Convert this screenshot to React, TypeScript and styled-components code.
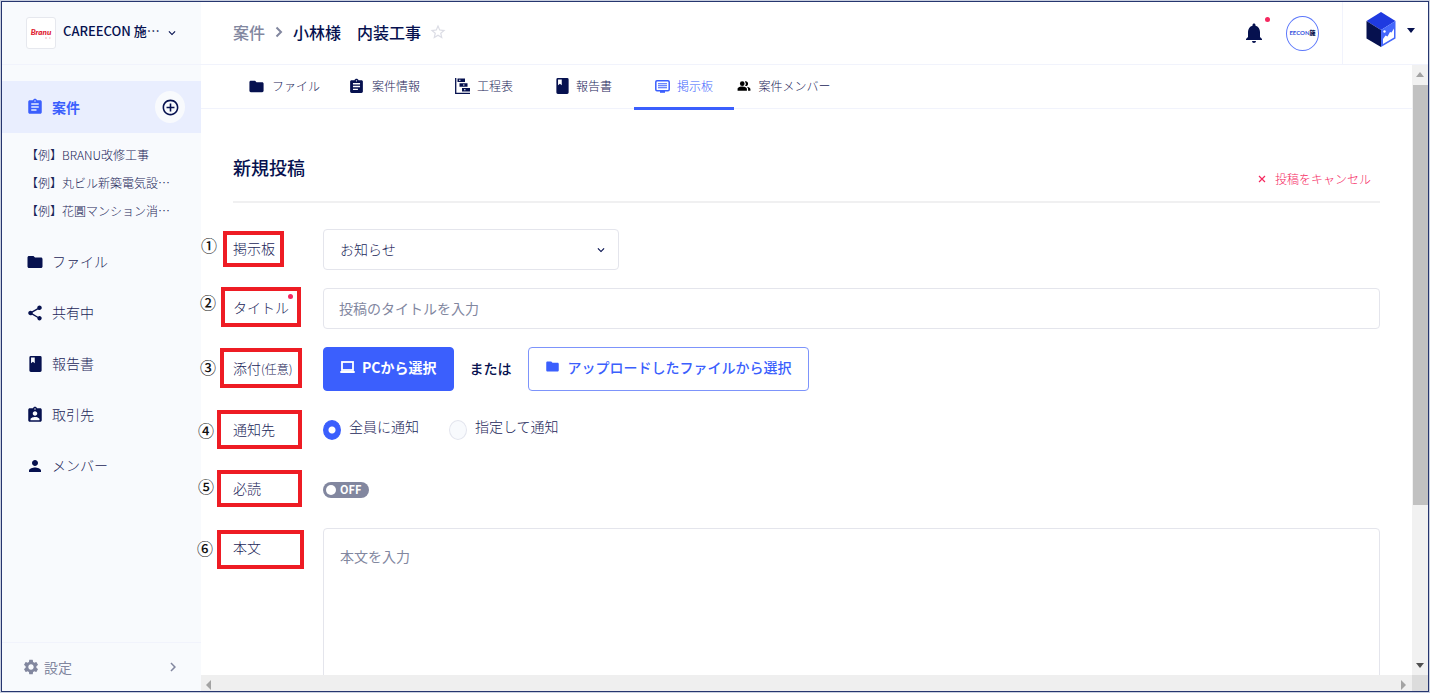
import React from 'react';
import styled, { createGlobalStyle, css } from 'styled-components';
import {
  MdAssignment,
  MdAssignmentInd,
  MdFolder,
  MdNotifications,
  MdPeopleAlt,
  MdPerson,
  MdSettings,
  MdShare,
  MdStarBorder,
  MdAddCircleOutline,
  MdKeyboardArrowDown,
  MdKeyboardArrowRight,
} from 'react-icons/md';

const color = {
  navy: '#06114f',
  text: '#1b2659',
  muted: '#82879f',
  blue: '#3b5ffd',
  pink: '#f5285f',
  line: '#f1f3fc',
  field: '#e4e5ec',
  side: '#f8fafd',
  mark: '#ee1c24',
};

const GlobalStyle = createGlobalStyle`
  *, *::before, *::after { box-sizing: border-box; }
  body {
    margin: 0;
    background: #fff;
    color: ${color.text};
    font-family: "Noto Sans CJK JP", "Noto Sans", sans-serif;
    font-size: 14px;
    font-weight: 300;
    line-height: 20px;
  }
  button, input, select, textarea { font: inherit; color: inherit; margin: 0; }
  button { border: 0; padding: 0; background: none; cursor: pointer; }
  a { color: inherit; text-decoration: none; }
  svg { display: block; flex: none; }
  ul { list-style: none; margin: 0; padding: 0; }
`;

const Frame = styled.div`
  height: 100vh;
  padding: 1px;
  background: #c9cfdf;
`;

const Shell = styled.div`
  display: flex;
  height: 100%;
  border: 1px solid #26366f;
  background: #fff;
  overflow: hidden;
`;

/* ---------- sidebar ---------- */

const Sidebar = styled.aside`
  display: flex;
  flex-direction: column;
  flex: 0 0 199px;
  background: ${color.side};
`;

const Workspace = styled.button`
  display: flex;
  align-items: center;
  height: 63px;
  padding: 0 22px 0 24px;
  border-bottom: 1px solid ${color.line};
  color: ${color.navy};
  font-size: 13px;
  font-weight: 500;
  text-align: left;
`;

const WorkspaceLogo = styled.span`
  display: grid;
  place-items: center;
  width: 30px;
  height: 32px;
  margin-right: 7px;
  border: 1px solid #e6e8ee;
  border-radius: 3px;
  background: #fff;
`;

const WorkspaceName = styled.span`
  flex: 1;
  padding-bottom: 5px;
  white-space: nowrap;
`;

const Nav = styled.nav`
  flex: 1;
  padding-top: 16px;
`;

const navRow = css`
  display: flex;
  align-items: center;
  gap: 8px;
  padding: 0 16px 0 25px;
`;

const ActiveRow = styled.div`
  ${navRow}
  height: 52px;
  background: #e9eefe;
  color: ${color.blue};
  font-weight: 700;
`;

const ActiveLink = styled.a`
  display: flex;
  flex: 1;
  align-items: center;
  gap: 8px;
`;

const AddButton = styled.button`
  display: grid;
  place-items: center;
  width: 30px;
  height: 32px;
  border-radius: 50%;
  background: ${color.side};
  color: ${color.navy};
`;

const ProjectList = styled.ul`
  padding: 8px 0 11px 24px;
  font-size: 12px;
  line-height: 28px;
`;

const NavLink = styled.a`
  ${navRow}
  height: 51px;

  svg { color: ${color.navy}; }
`;

const NavText = styled.span`
  padding-bottom: 2px;
`;

const NavIcon = styled.span`
  display: flex;
  justify-content: center;
  width: 18px;
  margin-left: -1px;
`;

const Settings = styled.a`
  display: flex;
  align-items: center;
  gap: 4px;
  height: 49px;
  padding: 0 19px 0 20px;
  border-top: 1px solid ${color.line};
  color: ${color.muted};

  span { flex: 1; font-weight: 400; }
`;

/* ---------- header ---------- */

const Main = styled.main`
  display: flex;
  flex: 1;
  flex-direction: column;
  min-width: 0;
`;

const Header = styled.header`
  display: flex;
  align-items: stretch;
  flex: 0 0 63px;
  padding-left: 32px;
  border-bottom: 1px solid ${color.line};
`;

const Breadcrumb = styled.div`
  display: flex;
  flex: 1;
  align-items: center;
  padding-bottom: 2px;
  color: ${color.navy};
  font-size: 16px;
  font-weight: 500;
  line-height: 24px;
  white-space: nowrap;

  a { color: ${color.muted}; }
  button { margin-left: 8px; color: #dcdde5; }
`;

const Crumb = styled.svg`
  margin: 0 10px;
`;

const HeaderTools = styled.div`
  display: flex;
  align-items: center;
  gap: 20px;
  padding-right: 23px;
`;

const BellButton = styled.button`
  position: relative;
  color: ${color.navy};
`;

const Dot = styled.span<{ $top: number; $right: number }>`
  position: absolute;
  top: ${(p) => p.$top}px;
  right: ${(p) => p.$right}px;
  width: 5px;
  height: 5px;
  border-radius: 50%;
  background: ${color.pink};
`;

const Avatar = styled.button`
  display: flex;
  align-items: center;
  justify-content: center;
  width: 33px;
  height: 35px;
  border: 1px solid #5d78fb;
  border-radius: 50%;
  color: #3552dd;
  font-family: Lato, "Noto Sans CJK JP", sans-serif;
  font-size: 6px;
  font-weight: 700;
  white-space: nowrap;

  b { color: ${color.navy}; }
`;

const AppSwitcher = styled.button`
  display: flex;
  align-items: center;
  gap: 10px;
  padding: 0 12px 6px 23px;
  border-left: 1px solid ${color.line};
`;

/* ---------- scrolling pane ---------- */

const Pane = styled.div`
  display: grid;
  flex: 1;
  grid-template-columns: minmax(0, 1fr) 16px;
  grid-template-rows: minmax(0, 1fr) 16px;
  min-height: 0;
`;

/* Callout numbers reach over the sidebar edge, so only the vertical axis is clipped. */
const Content = styled.div`
  min-height: 0;
  overflow-x: visible;
  overflow-y: clip;
`;

const VerticalBar = styled.div`
  display: flex;
  flex-direction: column;
  align-items: center;
  padding: 5px 0;
  background: #f1f1f1;
`;

const Thumb = styled.div`
  flex: 0 0 70%;
  align-self: stretch;
  margin: 5px 0 auto 1px;
  background: #c1c1c1;
`;

const HorizontalBar = styled.div`
  display: flex;
  align-items: center;
  justify-content: space-between;
  padding: 4px 4px 0 3px;
  background: #efefef;
`;

const Corner = styled.div`
  background: #dcdcdc;
`;

/* ---------- tabs ---------- */

const Tabs = styled.nav`
  display: flex;
  height: 44px;
  padding-left: 33px;
  border-bottom: 1px solid ${color.line};
`;

const Tab = styled.a<{ $active?: boolean }>`
  display: flex;
  align-items: center;
  justify-content: center;
  gap: 7px;
  flex: 0 0 100px;
  height: 45px;
  border-bottom: 3px solid ${(p) => (p.$active ? color.blue : 'transparent')};
  color: ${(p) => (p.$active ? color.blue : color.text)};
  font-size: 12px;
  white-space: nowrap;

  svg { color: ${(p) => (p.$active ? color.blue : color.navy)}; }
`;

/* ---------- form ---------- */

const Form = styled.form`
  padding: 42px 32px 0;
`;

const FormHead = styled.div`
  display: flex;
  align-items: flex-start;
  justify-content: space-between;
  height: 52px;
  margin-bottom: 26px;
  border-bottom: 2px solid #f0f0f1;
`;

const Title = styled.h1`
  margin: 0;
  color: ${color.navy};
  font-size: 18px;
  font-weight: 500;
  line-height: 32px;
`;

const Cancel = styled.button`
  display: flex;
  align-items: center;
  gap: 9px;
  margin: 18px 9px 0 0;
  color: ${color.pink};
  font-size: 12px;
`;

const Row = styled.div<{ $height: number }>`
  display: flex;
  align-items: center;
  min-height: ${(p) => p.$height}px;
  margin-bottom: 18px;
`;

const LabelCell = styled.div<{ $top?: boolean }>`
  position: relative;
  flex: 0 0 90px;
  align-self: ${(p) => (p.$top ? 'flex-start' : 'center')};
  padding-bottom: 2px;
  line-height: 39px;
  white-space: nowrap;

  small { font-size: 12px; }
`;

const Callout = styled.span<{ $left: number; $top: number; $width: number; $height: number }>`
  position: absolute;
  left: ${(p) => p.$left}px;
  top: ${(p) => p.$top}px;
  width: ${(p) => p.$width}px;
  height: ${(p) => p.$height}px;
  border: 4px solid ${color.mark};
  pointer-events: none;
`;

const CalloutNumber = styled.span<{ $left: number; $top: number }>`
  position: absolute;
  left: ${(p) => p.$left}px;
  top: ${(p) => p.$top}px;
  color: #111;
  font-size: 16px;
  font-weight: 500;
  line-height: 20px;
`;

const SelectWrap = styled.div`
  display: flex;
  align-items: center;
  flex: 0 1 296px;

  svg { margin-left: -25px; pointer-events: none; color: ${color.navy}; }
`;

const field = css`
  width: 100%;
  border: 1px solid ${color.field};
  border-radius: 4px;
  background: #fff;
  outline: 0;
`;

const Select = styled.select`
  ${field}
  height: 41px;
  padding: 0 16px 2px;
  appearance: none;
`;

const Input = styled.input`
  ${field}
  height: 41px;
  padding: 0 15px 2px;
  &::placeholder { color: ${color.muted}; font-weight: 400; }
`;

const TextArea = styled.textarea`
  ${field}
  display: block;
  height: 260px;
  padding: 17px 16px;
  resize: none;
  &::placeholder { color: ${color.muted}; font-weight: 400; }
`;

const UploadButton = styled.button<{ $primary?: boolean }>`
  display: flex;
  align-items: center;
  gap: ${(p) => (p.$primary ? 7 : 8)}px;
  height: 44px;
  padding: 0 16px 5px;
  border: 1px solid ${(p) => (p.$primary ? color.blue : '#7d94fb')};
  border-radius: 4px;
  background: ${(p) => (p.$primary ? color.blue : '#fff')};
  color: ${(p) => (p.$primary ? '#fff' : color.blue)};
  font-weight: ${(p) => (p.$primary ? 700 : 500)};
  white-space: nowrap;
`;

const Or = styled.span`
  margin: 0 16px;
  padding-bottom: 2px;
  color: ${color.navy};
  font-weight: 500;
`;

const RadioLabel = styled.label`
  display: flex;
  align-items: flex-start;
  gap: 8px;
  margin-right: 30px;
  padding-bottom: 4px;
`;

const Radio = styled.input`
  appearance: none;
  width: 18px;
  height: 20px;
  margin-top: 4px;
  border: 1px solid #e3e5ee;
  border-radius: 50%;
  background: ${color.side};

  &:checked {
    border-color: ${color.blue};
    background: radial-gradient(circle, #fff 3px, ${color.blue} 4px);
  }
`;

const Switch = styled.label`
  display: flex;
  align-items: center;
  gap: 4px;
  width: 46px;
  height: 16px;
  padding-left: 3px;
  border-radius: 8px;
  background: ${color.muted};
  color: #fff;
  font-size: 11px;
  font-weight: 700;
  line-height: 14px;

  span { padding-bottom: 2px; }
`;

const SwitchInput = styled.input`
  appearance: none;
  width: 10px;
  height: 10px;
  border-radius: 50%;
  background: #fff;
`;

/* ---------- drawings ---------- */

const ReportIcon = () => (
  <svg width="13" height="16" viewBox="0 0 14 17">
    <path fill="currentColor" fillRule="evenodd" d="M2 0h10a1.600 1.600 0 0 1 1.600 1.600v13.800A1.600 1.600 0 0 1 12 17H2A1.600 1.600 0 0 1 .4 15.400V1.600A1.600 1.600 0 0 1 2 0zM2.200 1.500v6.200l2-1.500 2 1.500V1.500z" />
  </svg>
);

const ScheduleIcon = () => (
  <svg width="15" height="16" viewBox="0 0 15 16">
    <path d="M.7 0v15.300H15" fill="none" stroke="currentColor" strokeWidth="1.300" />
    <path fill="currentColor" fillRule="evenodd" d="M2.500.5h7.500v3.500H2.500zM4 1.700v1.100h1.500V1.700zM4.500 5.300h8v3.500h-8zM8 6.500v1.100h1.500V6.500zM7 10h8v3.500H7zM9 11.200v1.100h1.500v-1.100z" />
  </svg>
);

const BoardIcon = () => (
  <svg width="15" height="15" viewBox="0 0 15 15">
    <rect x=".8" y="1.800" width="13.400" height="10" rx="1.200" fill="none" stroke="currentColor" strokeWidth="1.500" />
    <path d="M3 4.800h9M3 6.800h9M3 8.800h9" stroke="currentColor" strokeWidth="1.100" />
    <path d="M5 12h5v1.800H5z" fill="currentColor" />
  </svg>
);

const LaptopIcon = () => (
  <svg width="15" height="14" viewBox="0 0 15 14">
    <rect x="2" y="2" width="11" height="8" fill="none" stroke="currentColor" strokeWidth="1.800" />
    <path d="M.3 12h14.400" stroke="currentColor" strokeWidth="2" />
  </svg>
);

const BranuLogo = () => (
  <svg width="24" height="16" viewBox="0 0 24 16" aria-label="Branu">
    <text x="12" y="10" textAnchor="middle" fontFamily="Lato, sans-serif" fontSize="8" fontStyle="italic" fontWeight="900" fill="#e0202f">Branu</text>
    <path d="M16 13h2M20 13h1.500" stroke="#efb4b8" strokeWidth="1" />
  </svg>
);

const CubeLogo = () => (
  <svg width="30" height="36" viewBox="0 0 30 36">
    <path d="M15 0 29.500 9 15 18 .5 9z" fill="#1f3ae0" />
    <path d="M.5 9 15 18v17L.5 26.500z" fill="#06114f" />
    <path d="M29.500 9 15 18v17l14.500-8.500z" fill="#4467fb" />
    <path d="M17 32v-5l2.500-3.500 2 1 2.500-4.500 1.500.5 2.500-4v9z" fill="#fff" />
    <circle cx="18.500" cy="19.500" r="1.200" fill="#fff" />
  </svg>
);

const Arrow = ({ dir, fill }: { dir: 'up' | 'down' | 'left' | 'right'; fill: string }) => {
  const shapes = {
    up: 'M1 7 5 2l4 5z',
    down: 'M1 3l4 5 4-5z',
    left: 'M7 0 2 5l5 5z',
    right: 'M3 0l5 5-5 5z',
  };
  return (
    <svg width="10" height="10" viewBox="0 0 10 10">
      <path d={shapes[dir]} fill={fill} />
    </svg>
  );
};

/* ---------- page ---------- */

type Mark = { n: string; left: number; top: number; width: number; height: number; numberLeft: number; numberTop: number };

const Marker = ({ mark }: { mark: Mark }) => (
  <>
    <CalloutNumber $left={mark.numberLeft} $top={mark.numberTop}>{mark.n}</CalloutNumber>
    <Callout $left={mark.left} $top={mark.top} $width={mark.width} $height={mark.height} />
  </>
);

const marks: Record<string, Mark> = {
  board: { n: '①', left: -10, top: 2, width: 61, height: 36, numberLeft: -32, numberTop: 6 },
  title: { n: '②', left: -12, top: -1, width: 80, height: 40, numberLeft: -33, numberTop: 4 },
  attach: { n: '③', left: -13, top: -1, width: 82, height: 40, numberLeft: -33, numberTop: 8 },
  notify: { n: '④', left: -16, top: 0, width: 85, height: 39, numberLeft: -35, numberTop: 10 },
  must: { n: '⑤', left: -16, top: 1, width: 85, height: 37, numberLeft: -35, numberTop: 7 },
  body: { n: '⑥', left: -16, top: 2, width: 87, height: 39, numberLeft: -36, numberTop: 10 },
};

const projects = ['【例】BRANU改修工事', '【例】丸ビル新築電気設…', '【例】花圓マンション消…'];

const navItems = [
  { label: 'ファイル', icon: <MdFolder size={18} /> },
  { label: '共有中', icon: <MdShare size={18} /> },
  { label: '報告書', icon: <ReportIcon /> },
  { label: '取引先', icon: <MdAssignmentInd size={18} /> },
  { label: 'メンバー', icon: <MdPerson size={18} /> },
];

const tabs = [
  { label: 'ファイル', icon: <MdFolder size={17} /> },
  { label: '案件情報', icon: <MdAssignment size={17} /> },
  { label: '工程表', icon: <ScheduleIcon /> },
  { label: '報告書', icon: <ReportIcon /> },
  { label: '掲示板', icon: <BoardIcon />, active: true },
  { label: '案件メンバー', icon: <MdPeopleAlt size={14} color="#000" /> },
];

export default function App() {
  return (
    <Frame>
      <GlobalStyle />
      <Shell>
        <Sidebar>
          <Workspace type="button">
            <WorkspaceLogo><BranuLogo /></WorkspaceLogo>
            <WorkspaceName>CAREECON 施…</WorkspaceName>
            <MdKeyboardArrowDown size={14} />
          </Workspace>
          <Nav>
            <ActiveRow>
              <ActiveLink href="#projects">
                <NavIcon><MdAssignment size={18} /></NavIcon>
                案件
              </ActiveLink>
              <AddButton type="button" aria-label="案件を追加"><MdAddCircleOutline size={19} /></AddButton>
            </ActiveRow>
            <ProjectList>
              {projects.map((p) => (
                <li key={p}><a href="#project">{p}</a></li>
              ))}
            </ProjectList>
            {navItems.map((item) => (
              <NavLink key={item.label} href="#nav">
                <NavIcon>{item.icon}</NavIcon>
                <NavText>{item.label}</NavText>
              </NavLink>
            ))}
          </Nav>
          <Settings href="#settings">
            <MdSettings size={18} />
            <span>設定</span>
            <MdKeyboardArrowRight size={18} />
          </Settings>
        </Sidebar>

        <Main>
          <Header>
            <Breadcrumb>
              <a href="#projects">案件</a>
              <Crumb width="8" height="12" viewBox="0 0 8 12">
                <path d="M1.500 1.500 6 6l-4.500 4.500" fill="none" stroke={color.muted} strokeWidth="2" />
              </Crumb>
              小林様　内装工事
              <button type="button" aria-label="お気に入り"><MdStarBorder size={18} /></button>
            </Breadcrumb>
            <HeaderTools>
              <BellButton type="button" aria-label="通知">
                <MdNotifications size={24} />
                <Dot $top={-4} $right={-4} />
              </BellButton>
              <Avatar type="button"><span>EECON<b>施</b></span></Avatar>
            </HeaderTools>
            <AppSwitcher type="button" aria-label="アプリ切り替え">
              <CubeLogo />
              <Arrow dir="down" fill={color.navy} />
            </AppSwitcher>
          </Header>

          <Pane>
            <Content>
              <Tabs>
                {tabs.map((t) => (
                  <Tab key={t.label} href="#tab" $active={t.active}>
                    {t.icon}
                    {t.label}
                  </Tab>
                ))}
              </Tabs>

              <Form>
                <FormHead>
                  <Title>新規投稿</Title>
                  <Cancel type="button">
                    <svg width="8" height="8" viewBox="0 0 8 8">
                      <path d="M1 1l6 6M7 1 1 7" stroke="currentColor" strokeWidth="1.200" />
                    </svg>
                    投稿をキャンセル
                  </Cancel>
                </FormHead>

                <Row $height={41}>
                  <LabelCell>
                    <label htmlFor="board">掲示板</label>
                    <Marker mark={marks.board} />
                  </LabelCell>
                  <SelectWrap>
                    <Select id="board" defaultValue="news">
                      <option value="news">お知らせ</option>
                    </Select>
                    <MdKeyboardArrowDown size={14} />
                  </SelectWrap>
                </Row>

                <Row $height={41}>
                  <LabelCell>
                    <label htmlFor="title">タイトル</label>
                    <Dot $top={6} $right={30} />
                    <Marker mark={marks.title} />
                  </LabelCell>
                  <Input id="title" placeholder="投稿のタイトルを入力" />
                </Row>

                <Row $height={44}>
                  <LabelCell>
                    <span>添付<small>(任意)</small></span>
                    <Marker mark={marks.attach} />
                  </LabelCell>
                  <UploadButton type="button" $primary><LaptopIcon />PCから選択</UploadButton>
                  <Or>または</Or>
                  <UploadButton type="button"><MdFolder size={15} />アップロードしたファイルから選択</UploadButton>
                </Row>

                <Row $height={42}>
                  <LabelCell>
                    <span>通知先</span>
                    <Marker mark={marks.notify} />
                  </LabelCell>
                  <RadioLabel><Radio type="radio" name="notify" defaultChecked />全員に通知</RadioLabel>
                  <RadioLabel><Radio type="radio" name="notify" />指定して通知</RadioLabel>
                </Row>

                <Row $height={40}>
                  <LabelCell>
                    <label htmlFor="must">必読</label>
                    <Marker mark={marks.must} />
                  </LabelCell>
                  <Switch><SwitchInput id="must" type="checkbox" /><span>OFF</span></Switch>
                </Row>

                <Row $height={260}>
                  <LabelCell $top>
                    <label htmlFor="body">本文</label>
                    <Marker mark={marks.body} />
                  </LabelCell>
                  <TextArea id="body" placeholder="本文を入力" />
                </Row>
              </Form>
            </Content>
            <VerticalBar>
              <Arrow dir="up" fill="#a3a3a3" />
              <Thumb />
              <Arrow dir="down" fill="#505050" />
            </VerticalBar>
            <HorizontalBar>
              <Arrow dir="left" fill="#a3a3a3" />
              <Arrow dir="right" fill="#a3a3a3" />
            </HorizontalBar>
            <Corner />
          </Pane>
        </Main>
      </Shell>
    </Frame>
  );
}
